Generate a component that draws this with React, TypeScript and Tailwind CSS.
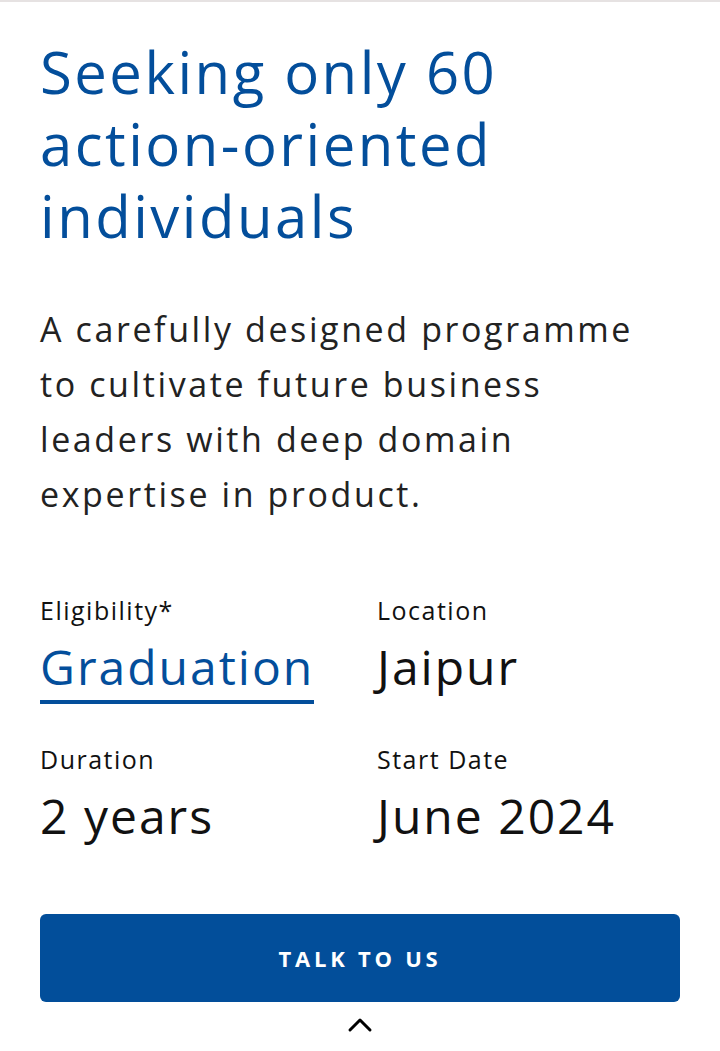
import React from 'react';

const facts = [
  { label: 'Eligibility*', value: 'Graduation', link: true },
  { label: 'Location', value: 'Jaipur' },
  { label: 'Duration', value: '2 years' },
  { label: 'Start Date', value: 'June 2024' },
];

export default function App() {
  return (
    <div className="min-h-[1051px] w-[720px] bg-white border-t-2 border-[#e6e2e2] font-['Open_Sans','Noto_Sans',sans-serif]">
      <div className="px-10 pt-[34px]">
        <h1 className="text-[58px] leading-[72px] font-normal text-[#034e9b] tracking-[2.5px]">
          <span className="block whitespace-nowrap">Seeking only 60</span>
          <span className="block whitespace-nowrap">action-oriented</span>
          <span className="block whitespace-nowrap">individuals</span>
        </h1>

        <p className="mt-[50px] text-[34px] leading-[55px] text-[#222222] tracking-[2.6px]">
          <span className="block whitespace-nowrap">A carefully designed programme</span>
          <span className="block whitespace-nowrap">to cultivate future business</span>
          <span className="block whitespace-nowrap">leaders with deep domain</span>
          <span className="block whitespace-nowrap">expertise in product.</span>
        </p>

        <div className="mt-[72px] grid grid-cols-[337px_1fr] gap-y-[39px]">
          {facts.map((f) => (
            <div key={f.label} className="flex flex-col">
              <span className="text-[25px] leading-[32px] text-[#111111] tracking-[1.5px]">{f.label}</span>
              {f.link ? (
                <span className="mt-[12px] self-start text-[48px] leading-[58px] text-[#034e9b] tracking-[2px] border-b-4 border-[#034e9b] pb-[4px]">
                  {f.value}
                </span>
              ) : (
                <span className="mt-[12px] text-[48px] leading-[58px] text-[#111111] tracking-[2px]">{f.value}</span>
              )}
            </div>
          ))}
        </div>

        <button className="mt-[69px] w-full h-[88px] rounded-[6px] bg-[#024e9a] text-white text-[22px] font-bold tracking-[0.17em] uppercase">
          Talk to us
        </button>

        <div className="flex justify-center mt-[15px]">
          <svg width="26" height="16" viewBox="0 0 26 16" fill="none" stroke="#000" strokeWidth="3" strokeLinecap="round" strokeLinejoin="round">
            <path d="M3 13 L13 3 L23 13" />
          </svg>
        </div>
      </div>
    </div>
  );
}
